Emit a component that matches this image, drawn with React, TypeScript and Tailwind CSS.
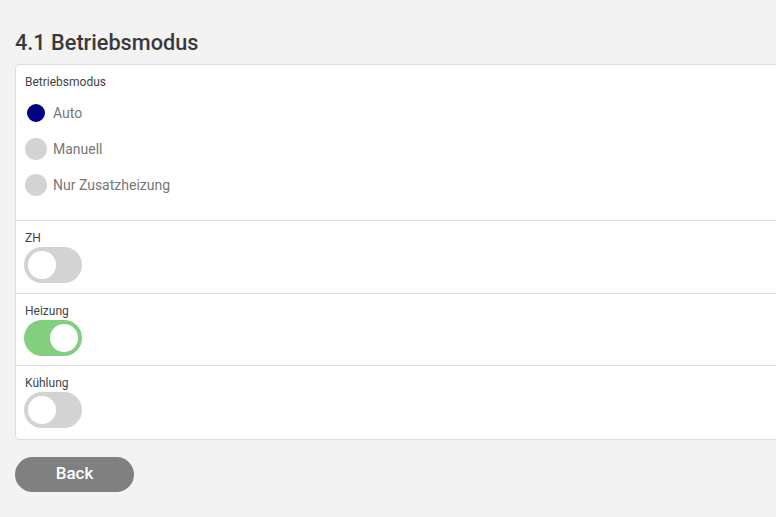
const modes = ['Auto', 'Manuell', 'Nur Zusatzheizung'];

const Toggle = ({ on }: { on: boolean }) => (
  <div
    className={`-ml-px w-[58px] h-[36px] rounded-full flex items-center px-[4px] ${
      on ? 'bg-[#84cf7f] justify-end' : 'bg-[#d3d3d3] justify-start'
    }`}
  >
    <div className="w-[28px] h-[28px] rounded-full bg-white" />
  </div>
);

const ToggleRow = ({ label, on, last }: { label: string; on: boolean; last?: boolean }) => (
  <div className={`h-[72.5px] pl-[9px] pt-[9px] ${last ? '' : 'border-b border-[#dddddd]'}`}>
    <div className="text-[12px] leading-[17px] text-[#444]">{label}</div>
    <Toggle on={on} />
  </div>
);

export default function App() {
  const selected = 0;
  return (
    <div className="w-[776px] h-[517px] overflow-hidden bg-[#f3f3f3] pl-[15px] font-['Roboto',sans-serif]">
      <h2 className="mt-[30px] text-[21.7px] leading-[26px] font-medium text-[#3a3a3a]">4.1 Betriebsmodus</h2>

      <div className="mt-[8px] -mr-[10px] bg-white border border-[#dddddd] rounded-l-[4px]">
        <div className="pl-[9px] pt-[9px] pb-[17px] border-b border-[#dddddd]">
          <div className="text-[12px] leading-[17px] text-[#444]">Betriebsmodus</div>
          <div className="mt-[4px] flex flex-col">
            {modes.map((m, i) => (
              <div key={m} className="h-[36px] flex items-center">
                <div
                  className={`w-[22px] h-[22px] rounded-full ${
                    i === selected ? 'bg-[#000080] border-2 border-white' : 'bg-[#d3d3d3]'
                  }`}
                />
                <span className="ml-[6px] text-[14px] text-[#777]">{m}</span>
              </div>
            ))}
          </div>
        </div>
        <ToggleRow label="ZH" on={false} />
        <ToggleRow label="Heizung" on={true} />
        <ToggleRow label="Kühlung" on={false} last />
      </div>

      <button className="mt-[17px] w-[119px] h-[35px] rounded-full bg-[#808080] text-white text-[17px] font-medium">
        Back
      </button>
    </div>
  );
}
